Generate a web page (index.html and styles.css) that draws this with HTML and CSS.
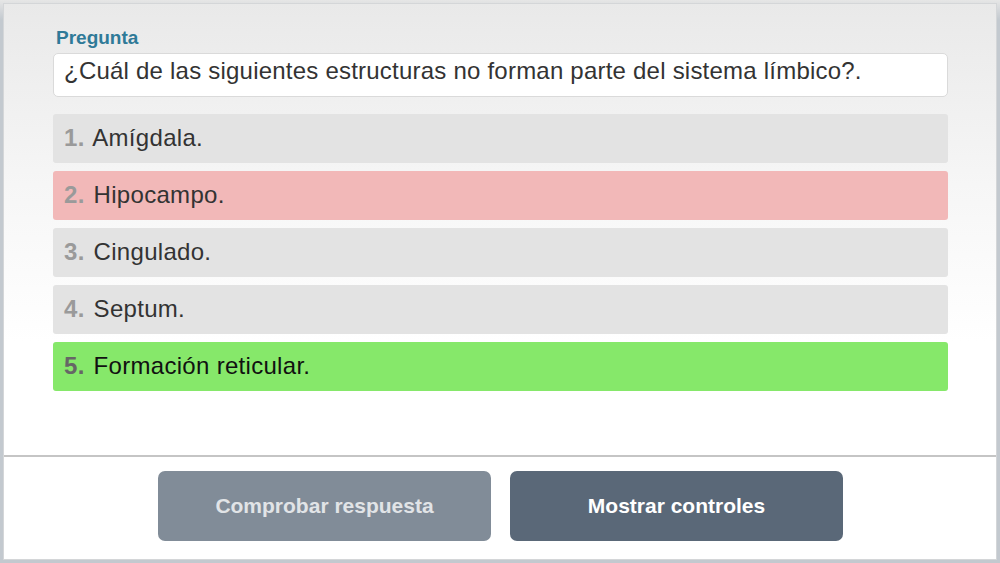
FILE: index.html
```html
<!DOCTYPE html>
<html lang="es">
<head>
<meta charset="utf-8">
<link rel="stylesheet" href="styles.css">
</head>
<body>
<div class="frame">
  <div class="card">
    <main class="content">
      <h2 class="label">Pregunta</h2>
      <div class="question">¿Cuál de las siguientes estructuras no forman parte del sistema límbico?.</div>
      <ol class="options">
        <li class="opt"><span class="num">1.</span> Amígdala.</li>
        <li class="opt wrong"><span class="num">2.</span> Hipocampo.</li>
        <li class="opt"><span class="num">3.</span> Cingulado.</li>
        <li class="opt"><span class="num">4.</span> Septum.</li>
        <li class="opt right"><span class="num">5.</span> Formación reticular.</li>
      </ol>
    </main>
    <footer class="footer">
      <button class="btn btn-check">Comprobar respuesta</button>
      <button class="btn btn-show">Mostrar controles</button>
    </footer>
  </div>
</div>
</body>
</html>
```

FILE: styles.css
```css
* { box-sizing: border-box; }
html, body {
  margin: 0;
  padding: 0;
  width: 1000px;
  height: 563px;
  overflow: hidden;
  font-family: "Liberation Sans", Arial, sans-serif;
}
body { background: #c3c9cf; }
.frame {
  width: 1000px;
  height: 563px;
  padding: 3px 3px 3px 3px;
  background: linear-gradient(#e6e6e6 0, #c3c9cf 20px);
}
.card {
  width: 994px;
  height: 557px;
  background: #fff;
  border: 1px solid #d4d6d8;
  display: flex;
  flex-direction: column;
}
.content {
  flex: 0 0 451px;
  background: linear-gradient(#e9e9e9 0%, #f6f6f6 40%, #ffffff 75%);
  padding: 23px 48px 0 49px;
}
.label {
  margin: 0 0 4px 0;
  padding-left: 3px;
  font-size: 19px;
  font-weight: bold;
  color: #2f7a98;
  line-height: 22px;
}
.question {
  background: #fff;
  border: 1px solid #dadada;
  border-radius: 5px;
  height: 44px;
  padding: 3px 10px 0 10px;
  font-size: 24px;
  letter-spacing: 0.22px;
  line-height: 28px;
  color: #333;
  white-space: nowrap;
}
.options {
  list-style: none;
  margin: 17px 0 0 0;
  padding: 0;
  display: flex;
  flex-direction: column;
  gap: 8px;
}
.opt {
  height: 49px;
  background: #e3e3e3;
  border-radius: 3px;
  padding: 0 11px 1px 11px;
  display: flex;
  align-items: center;
  font-size: 24px;
  letter-spacing: 0.3px;
  color: #333;
  white-space: pre;
}
.opt .num {
  font-weight: bold;
  color: #9a9a9a;
  margin-right: 2px;
}
.opt.wrong { background: #f2b8b8; }
.opt.right { background: #86e86a; color: #111; }
.opt.right .num { color: #666; }
.footer {
  flex: 1;
  border-top: 2px solid #c5c5c5;
  display: flex;
  justify-content: center;
  align-items: flex-start;
  gap: 19px;
  padding-top: 14px;
  padding-left: 1px;
}
.btn {
  width: 333px;
  height: 70px;
  border: none;
  border-radius: 7px;
  font-family: "Liberation Sans", Arial, sans-serif;
  font-size: 21px;
  font-weight: bold;
}
.btn-check { background: #818c98; color: #e1e4e7; }
.btn-show { background: #5a6878; color: #fff; }
```
